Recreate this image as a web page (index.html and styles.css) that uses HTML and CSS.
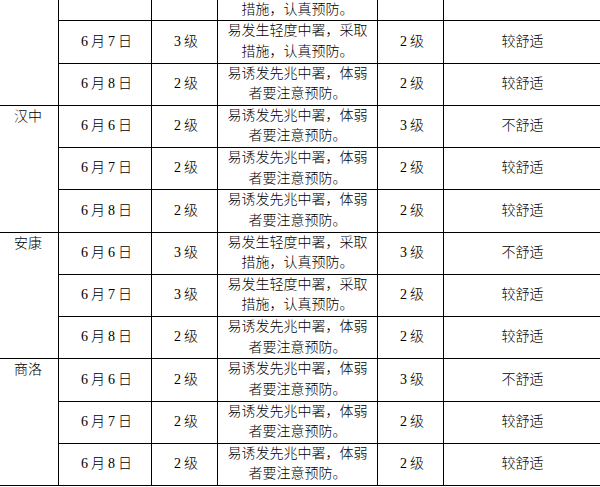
FILE: index.html
```html
<!DOCTYPE html>
<html lang="zh-CN">
<head>
<meta charset="utf-8">
<title>高温中暑气象等级预报</title>
<link rel="stylesheet" href="styles.css">
</head>
<body>
<table class="grid">
  <colgroup>
    <col class="c-city"><col class="c-date"><col class="c-lvl"><col class="c-desc"><col class="c-lvl2"><col class="c-feel">
  </colgroup>
  <tbody>
    <tr>
      <td class="city" rowspan="3"></td>
      <td></td>
      <td></td>
      <td class="desc">易发生轻度中署，采取措施，认真预防。</td>
      <td></td>
      <td></td>
    </tr>
    <tr>
      <td><span class="n">6</span>月<span class="n">7</span>日</td>
      <td><span class="n">3</span>级</td>
      <td class="desc">易发生轻度中署，采取措施，认真预防。</td>
      <td><span class="n">2</span>级</td>
      <td>较舒适</td>
    </tr>
    <tr>
      <td><span class="n">6</span>月<span class="n">8</span>日</td>
      <td><span class="n">2</span>级</td>
      <td class="desc">易诱发先兆中署，体弱者要注意预防。</td>
      <td><span class="n">2</span>级</td>
      <td>较舒适</td>
    </tr>

    <tr>
      <td class="city" rowspan="3">汉中</td>
      <td><span class="n">6</span>月<span class="n">6</span>日</td>
      <td><span class="n">2</span>级</td>
      <td class="desc">易诱发先兆中署，体弱者要注意预防。</td>
      <td><span class="n">3</span>级</td>
      <td>不舒适</td>
    </tr>
    <tr>
      <td><span class="n">6</span>月<span class="n">7</span>日</td>
      <td><span class="n">2</span>级</td>
      <td class="desc">易诱发先兆中署，体弱者要注意预防。</td>
      <td><span class="n">2</span>级</td>
      <td>较舒适</td>
    </tr>
    <tr>
      <td><span class="n">6</span>月<span class="n">8</span>日</td>
      <td><span class="n">2</span>级</td>
      <td class="desc">易诱发先兆中署，体弱者要注意预防。</td>
      <td><span class="n">2</span>级</td>
      <td>较舒适</td>
    </tr>

    <tr>
      <td class="city" rowspan="3">安康</td>
      <td><span class="n">6</span>月<span class="n">6</span>日</td>
      <td><span class="n">3</span>级</td>
      <td class="desc">易发生轻度中署，采取措施，认真预防。</td>
      <td><span class="n">3</span>级</td>
      <td>不舒适</td>
    </tr>
    <tr>
      <td><span class="n">6</span>月<span class="n">7</span>日</td>
      <td><span class="n">3</span>级</td>
      <td class="desc">易发生轻度中署，采取措施，认真预防。</td>
      <td><span class="n">2</span>级</td>
      <td>较舒适</td>
    </tr>
    <tr>
      <td><span class="n">6</span>月<span class="n">8</span>日</td>
      <td><span class="n">2</span>级</td>
      <td class="desc">易诱发先兆中署，体弱者要注意预防。</td>
      <td><span class="n">2</span>级</td>
      <td>较舒适</td>
    </tr>

    <tr>
      <td class="city" rowspan="3">商洛</td>
      <td><span class="n">6</span>月<span class="n">6</span>日</td>
      <td><span class="n">2</span>级</td>
      <td class="desc">易诱发先兆中署，体弱者要注意预防。</td>
      <td><span class="n">3</span>级</td>
      <td>不舒适</td>
    </tr>
    <tr>
      <td><span class="n">6</span>月<span class="n">7</span>日</td>
      <td><span class="n">2</span>级</td>
      <td class="desc">易诱发先兆中署，体弱者要注意预防。</td>
      <td><span class="n">2</span>级</td>
      <td>较舒适</td>
    </tr>
    <tr>
      <td><span class="n">6</span>月<span class="n">8</span>日</td>
      <td><span class="n">2</span>级</td>
      <td class="desc">易诱发先兆中署，体弱者要注意预防。</td>
      <td><span class="n">2</span>级</td>
      <td>较舒适</td>
    </tr>
  </tbody>
</table>
</body>
</html>
```

FILE: styles.css
```css
html, body {
  margin: 0;
  padding: 0;
  background: #fff;
  overflow: hidden;
}

.grid {
  margin: -22px 0 0 -3px;
  border-collapse: collapse;
  table-layout: fixed;
  width: 604px;
  font-family: "Liberation Serif", "Noto Sans CJK SC", serif;
  font-size: 14px;
  font-weight: 300;
  line-height: 20.6px;
  color: #000;
}

.c-city { width: 61px; }
.c-date { width: 93px; }
.c-lvl { width: 66px; }
.c-desc { width: 160px; }
.c-lvl2 { width: 66px; }
.c-feel { width: 158px; }

.grid tr {
  height: 42.25px;
}

.grid td {
  border: 1px solid #000;
  padding: 0;
  text-align: center;
  vertical-align: middle;
}

.grid td.city {
  vertical-align: top;
  padding-top: 1px;
}

.grid td.desc {
  padding: 0 9px;
}

.n {
  margin: 0 3px;
}
```
